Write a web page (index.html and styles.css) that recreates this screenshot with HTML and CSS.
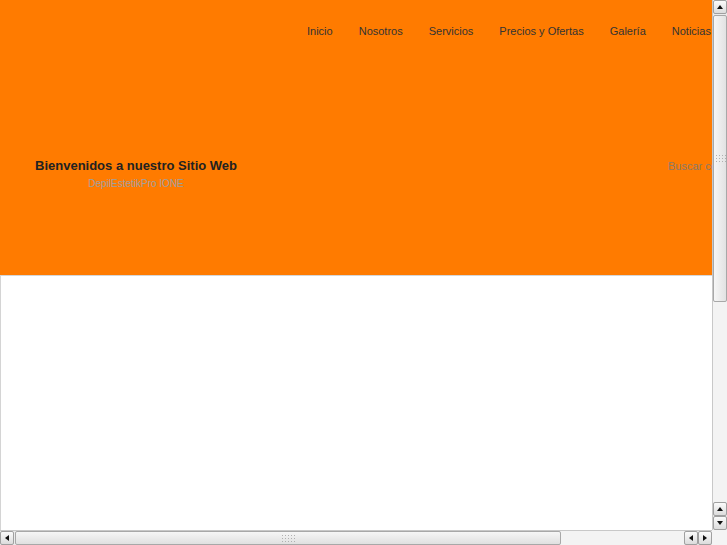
FILE: index.html
```html
<!DOCTYPE html>
<html lang="es">
<head>
<meta charset="utf-8">
<title>DepilEstetikPro IONE</title>
<link rel="stylesheet" href="styles.css">
</head>
<body>
<div class="window">
  <div class="viewport">
    <header class="header">
      <nav class="nav">
        <a class="nav-item">Inicio</a>
        <a class="nav-item">Nosotros</a>
        <a class="nav-item">Servicios</a>
        <a class="nav-item">Precios y Ofertas</a>
        <a class="nav-item">Galería</a>
        <a class="nav-item">Noticias</a>
      </nav>
      <div class="hero">
        <div class="brand">
          <h1 class="title">Bienvenidos a nuestro Sitio Web</h1>
          <p class="subtitle">DepilEstetikPro IONE</p>
        </div>
        <div class="search">Buscar con Google</div>
      </div>
    </header>
    <main class="content"></main>
  </div>
  <div class="vscroll">
    <div class="sbtn"><span class="tri up"></span></div>
    <div class="vthumb"><span class="grip"></span></div>
    <div class="vtrack"></div>
    <div class="sbtn"><span class="tri up"></span></div>
    <div class="sbtn"><span class="tri down"></span></div>
  </div>
  <div class="hscroll">
    <div class="sbtn"><span class="tri left"></span></div>
    <div class="hthumb"><span class="grip"></span></div>
    <div class="htrack"></div>
    <div class="sbtn"><span class="tri left"></span></div>
    <div class="sbtn"><span class="tri right"></span></div>
  </div>
  <div class="corner"></div>
</div>
</body>
</html>
```
FILE: styles.css
```css
html, body {
  margin: 0;
  padding: 0;
  width: 727px;
  height: 545px;
  overflow: hidden;
  background: #ffffff;
  font-family: "Liberation Sans", Arial, sans-serif;
}

.window {
  display: grid;
  grid-template-columns: 712px 15px;
  grid-template-rows: 530px 15px;
  width: 727px;
  height: 545px;
}

.viewport {
  overflow: hidden;
  display: flex;
  flex-direction: column;
  background: #ffffff;
}

.header {
  background: #ff7b00;
  height: 275px;
  flex: 0 0 275px;
  display: flex;
  flex-direction: column;
  border-bottom: 1px solid #d6d6d6;
}

.nav {
  display: flex;
  gap: 26px;
  padding: 24px 0 0 307px;
  white-space: nowrap;
  height: 14px;
}

.nav-item {
  font-size: 11px;
  line-height: 14px;
  color: #333333;
  text-decoration: none;
}

.hero {
  display: flex;
  align-items: flex-start;
  padding-top: 120px;
  white-space: nowrap;
}

.brand {
  display: flex;
  flex-direction: column;
  align-items: center;
  padding-left: 35px;
  width: 203px;
}

.title {
  margin: 0;
  font-size: 13px;
  line-height: 16px;
  font-weight: bold;
  color: #222222;
}

.subtitle {
  margin: 3px 0 0;
  font-size: 10px;
  line-height: 14px;
  color: #a0a0a0;
}

.search {
  margin-left: 431px;
  font-size: 11px;
  line-height: 16px;
  color: #8a7a6a;
}

.content {
  flex: 1;
  border-left: 1px solid #d4d4d4;
  background: #ffffff;
}

/* scrollbars */
.vscroll {
  display: flex;
  flex-direction: column;
  background: #ebebeb;
  border-left: 1px solid #c8c8c8;
  box-sizing: border-box;
}

.hscroll {
  display: flex;
  background: #ebebeb;
  border-top: 1px solid #c8c8c8;
  box-sizing: border-box;
}

.corner {
  background: #f4f4f4;
}

.sbtn {
  flex: 0 0 14px;
  width: 14px;
  height: 14px;
  box-sizing: border-box;
  border: 1px solid #a0a0a0;
  border-radius: 2px;
  background: linear-gradient(#fbfbfb, #dcdcdc);
  display: flex;
  align-items: center;
  justify-content: center;
}

.tri {
  width: 0;
  height: 0;
  border: 3px solid transparent;
}
.tri.up { border-bottom: 4px solid #111; border-top: 0; margin-top: -1px; }
.tri.down { border-top: 4px solid #111; border-bottom: 0; }
.tri.left { border-right: 4px solid #111; border-left: 0; }
.tri.right { border-left: 4px solid #111; border-right: 0; }

.vthumb {
  flex: 0 0 287px;
  margin-top: 1px;
  box-sizing: border-box;
  border: 1px solid #a8a8a8;
  border-radius: 2px;
  background: linear-gradient(to right, #f6f6f6, #e2e2e2);
  display: flex;
  align-items: center;
  justify-content: center;
}

.vtrack {
  flex: 1;
  background: #f3f3f3;
}

.hthumb {
  flex: 0 0 546px;
  margin-left: 1px;
  box-sizing: border-box;
  border: 1px solid #a8a8a8;
  border-radius: 2px;
  background: linear-gradient(#f6f6f6, #e0e0e0);
  display: flex;
  align-items: center;
  justify-content: center;
}

.htrack {
  flex: 1;
  background: #f3f3f3;
}

.grip {
  width: 11px;
  height: 10px;
  background-image: radial-gradient(circle, #b0b0b0 0.8px, transparent 1px);
  background-size: 3px 3px;
}

.hthumb .grip {
  width: 15px;
  height: 9px;
}
```
